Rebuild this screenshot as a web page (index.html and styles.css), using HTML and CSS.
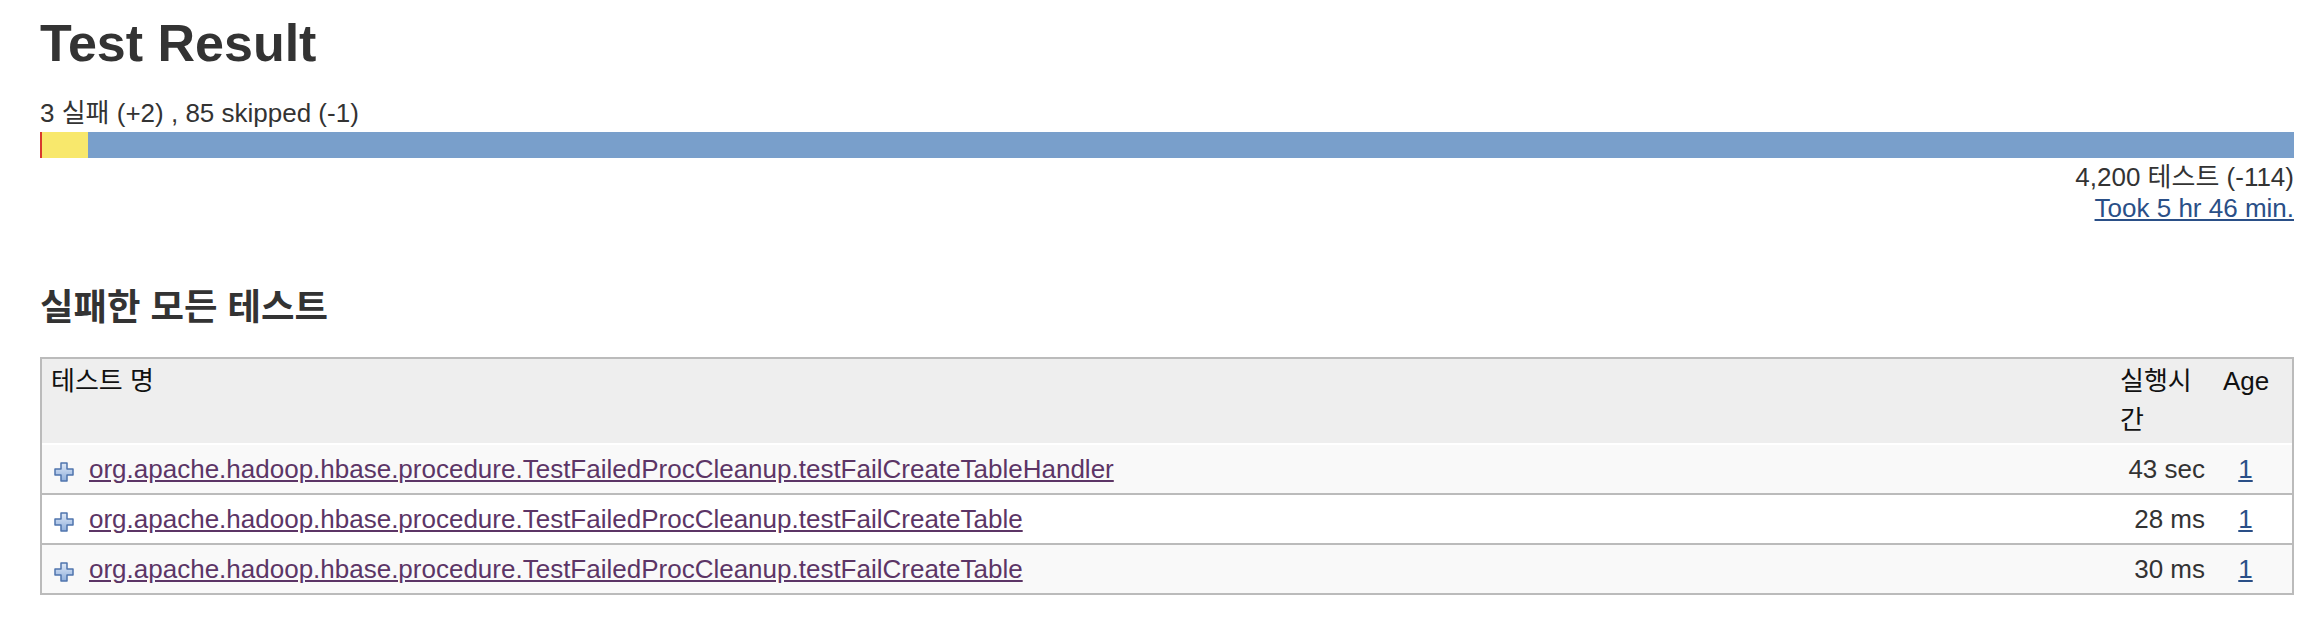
FILE: index.html
```html
<!DOCTYPE html>
<html lang="ko">
<head>
<meta charset="utf-8">
<title>Test Result</title>
<link rel="stylesheet" href="styles.css">
</head>
<body>
<div class="page">
  <h1 class="title">Test Result</h1>
  <div class="summary">3 실패 (+2) , 85 skipped (-1)</div>
  <div class="bar">
    <div class="bar-fail" style="width:2px"></div>
    <div class="bar-skip" style="width:45.6px"></div>
    <div class="bar-pass"></div>
  </div>
  <div class="totals">4,200 테스트 (-114)</div>
  <div class="took"><a class="link" href="#">Took 5 hr 46 min.</a></div>

  <h2 class="section">실패한 모든 테스트</h2>

  <table class="pane">
    <colgroup>
      <col class="c-name">
      <col class="c-dur">
      <col class="c-age">
    </colgroup>
    <thead>
      <tr>
        <th class="h-name">테스트 명</th>
        <th class="h-dur">실행시간</th>
        <th class="h-age">Age</th>
      </tr>
    </thead>
    <tbody>
      <tr class="odd">
        <td class="name"><a class="toggle" href="#"><svg class="plus" viewBox="0 0 20 20" width="20" height="20"><defs><linearGradient id="pg1" x1="0" y1="0" x2="0" y2="1"><stop offset="0" stop-color="#dfe9f7"/><stop offset="1" stop-color="#8eaedb"/></linearGradient></defs><polygon points="7,1 13,1 13,7 19,7 19,13 13,13 13,19 7,19 7,13 1,13 1,7 7,7" fill="url(#pg1)" stroke="#4f74ad" stroke-width="1.5" stroke-linejoin="round"/></svg></a><a class="test" href="#">org.apache.hadoop.hbase.procedure.TestFailedProcCleanup.testFailCreateTableHandler</a></td>
        <td class="dur">43 sec</td>
        <td class="age"><a class="link" href="#">1</a></td>
      </tr>
      <tr class="even">
        <td class="name"><a class="toggle" href="#"><svg class="plus" viewBox="0 0 20 20" width="20" height="20"><polygon points="7,1 13,1 13,7 19,7 19,13 13,13 13,19 7,19 7,13 1,13 1,7 7,7" fill="url(#pg1)" stroke="#4f74ad" stroke-width="1.5" stroke-linejoin="round"/></svg></a><a class="test" href="#">org.apache.hadoop.hbase.procedure.TestFailedProcCleanup.testFailCreateTable</a></td>
        <td class="dur">28 ms</td>
        <td class="age"><a class="link" href="#">1</a></td>
      </tr>
      <tr class="odd">
        <td class="name"><a class="toggle" href="#"><svg class="plus" viewBox="0 0 20 20" width="20" height="20"><polygon points="7,1 13,1 13,7 19,7 19,13 13,13 13,19 7,19 7,13 1,13 1,7 7,7" fill="url(#pg1)" stroke="#4f74ad" stroke-width="1.5" stroke-linejoin="round"/></svg></a><a class="test" href="#">org.apache.hadoop.hbase.procedure.TestFailedProcCleanup.testFailCreateTable</a></td>
        <td class="dur">30 ms</td>
        <td class="age"><a class="link" href="#">1</a></td>
      </tr>
    </tbody>
  </table>
</div>
</body>
</html>
```

FILE: styles.css
```css
html, body {
  margin: 0;
  padding: 0;
  background: #ffffff;
}

body {
  font-family: "Liberation Sans", "Noto Sans CJK KR", sans-serif;
  font-size: 26px;
  color: #333333;
}

.page {
  padding: 0 28px 0 40px;
}

.title {
  font-size: 52px;
  font-weight: bold;
  line-height: 58px;
  margin: 14px 0 26px 0;
  color: #333333;
}

.summary {
  line-height: 30px;
}

.bar {
  display: flex;
  height: 26px;
  margin-top: 4px;
}

.bar-fail {
  background: #d83a2e;
}

.bar-skip {
  background: #f8e86c;
}

.bar-pass {
  flex: 1;
  background: #799fcb;
}

.totals {
  margin-top: 4px;
  line-height: 30.5px;
  text-align: right;
}

.took {
  line-height: 30.5px;
  text-align: right;
}

.link {
  color: #2a4f87;
  text-decoration: underline;
}

.section {
  font-size: 36.4px;
  font-weight: bold;
  line-height: 44px;
  margin: 63px 0 27px 0;
  color: #333333;
}

.pane {
  width: 100%;
  table-layout: fixed;
  border-collapse: separate;
  border-spacing: 0;
  border: 2px solid #bbbbbb;
}

.c-dur {
  width: 106px;
}

.c-age {
  width: 77px;
}

.pane th {
  background: #eeeeee;
  font-weight: normal;
  color: #111111;
  text-align: left;
  vertical-align: top;
  line-height: 39px;
  padding: 3px 10px 3px 9px;
}

.pane th.h-dur {
  padding-left: 11px;
  padding-right: 10px;
}

.pane th.h-age {
  padding-left: 8px;
  padding-right: 0;
}

.pane td {
  line-height: 36px;
  padding: 6px 10px;
  border-top: 2px solid #bbbbbb;
  vertical-align: middle;
  white-space: nowrap;
}

.pane tbody tr:first-child td {
  border-top: 2px solid #ffffff;
}

.pane tr.odd td {
  background: #f9f9f9;
}

.pane tr.even td {
  background: #ffffff;
}

.pane td.name {
  padding-left: 12px;
}

.toggle {
  display: inline-block;
  margin-right: 15px;
  vertical-align: -4px;
  line-height: 0;
}

.plus {
  display: block;
}

.test {
  color: #5c3566;
  text-decoration: underline;
}

.pane td.dur {
  text-align: right;
  padding-right: 10px;
  color: #333333;
}

.pane td.age {
  text-align: center;
  padding-left: 0;
  padding-right: 16px;
}
```
